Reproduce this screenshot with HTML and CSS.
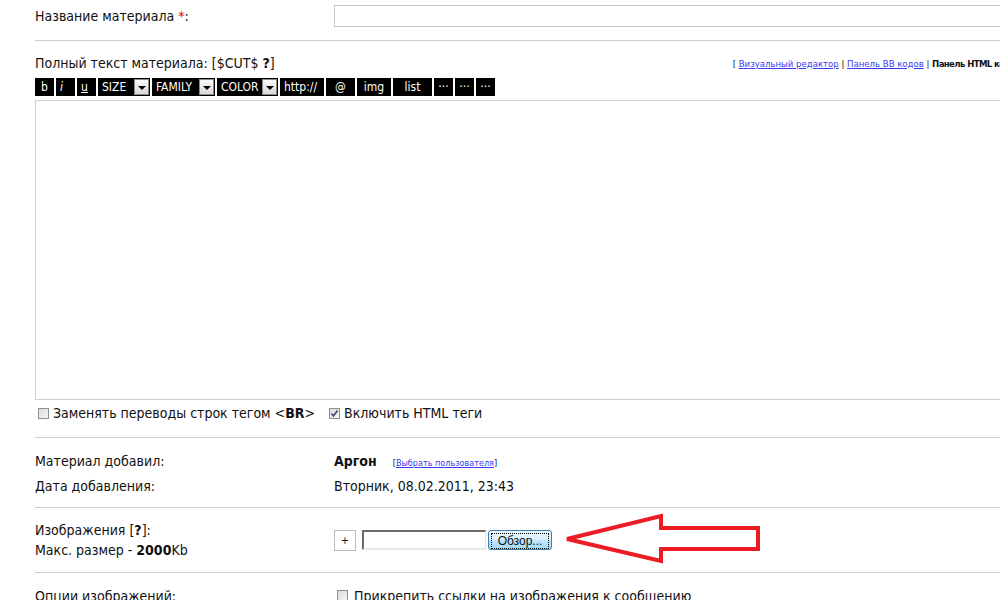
FILE: index.html
```html
<!DOCTYPE html>
<html lang="ru">
<head>
  <meta charset="UTF-8">
  <title>Добавление материала</title>
  <link rel="stylesheet" href="styles.css">
</head>
<body>
  <div class="page">
    <div class="row first">
      <div class="label">Название материала <span class="req">*</span>:</div>
      <div class="value"><input type="text" class="title-input"></div>
    </div>
    <div class="sep"></div>

    <div class="editor-head">
      <span class="label">Полный текст материала: [$CUT$ <b>?</b>]</span>
      <span class="modes">[ <a href="#">Визуальный редактор</a> | <a href="#">Панель BB кодов</a> | <b>Панель HTML кодов</b> ]</span>
    </div>
    <div class="toolbar">
      <span class="tb w19 bold">b</span>
      <span class="tb w19"><i>i</i></span>
      <span class="tb w19"><u>u</u></span>
      <span class="tb sel w52">SIZE<span class="arr"></span></span>
      <span class="tb sel w63">FAMILY<span class="arr"></span></span>
      <span class="tb sel w61">COLOR<span class="arr"></span></span>
      <span class="tb w44">http://</span>
      <span class="tb w29 c">@</span>
      <span class="tb w34 c">img</span>
      <span class="tb w39 c">list</span>
      <span class="tb w19 c">···</span>
      <span class="tb w19 c">···</span>
      <span class="tb w19 c">···</span>
    </div>
    <textarea class="message"></textarea>
    <div class="checks">
      <span class="chk"><span class="box"></span><span>Заменять переводы строк тегом &lt;<b>BR</b>&gt;</span></span>
      <span class="chk"><span class="box"><svg width="9" height="9" viewBox="0 0 9 9"><path d="M1.5 4.5 L3.5 7 L7.5 1.5" fill="none" stroke="#3d4a6b" stroke-width="1.6"/></svg></span><span>Включить HTML теги</span></span>
    </div>
    <div class="sep after-checks"></div>

    <div class="row info top">
      <div class="label">Материал добавил:</div>
      <div class="value"><b class="author">Аргон</b> <span class="small">[<a href="#">Выбрать пользователя</a>]</span></div>
    </div>
    <div class="row info">
      <div class="label">Дата добавления:</div>
      <div class="value">Вторник, 08.02.2011, 23:43</div>
    </div>
    <div class="sep after-info"></div>

    <div class="row images">
      <div class="label">Изображения [<b>?</b>]:<br>Макс. размер - <b>2000</b>Kb</div>
      <div class="value upload">
        <span class="plus">+</span>
        <span class="file-field"></span>
        <span class="browse"><span class="focus">Обзор...</span></span>
        <svg class="arrow" width="200" height="54" viewBox="0 0 200 54">
          <polygon points="4,26 98,3 98,15 195,15 195,36 98,36 98,48" fill="none" stroke="#ed1c24" stroke-width="4" stroke-linejoin="miter"/>
        </svg>
      </div>
    </div>
    <div class="sep"></div>

    <div class="row opts">
      <div class="label">Опции изображений:</div>
      <div class="value"><span class="chk"><span class="box"></span><span>Прикрепить ссылки на изображения к сообщению</span></span></div>
    </div>
  </div>
</body>
</html>
```

FILE: styles.css
```css
html, body {
  margin: 0;
  padding: 0;
  overflow: hidden;
  background: #fff;
}
body {
  font-family: "DejaVu Sans Condensed", "DejaVu Sans", sans-serif;
  font-size: 14px;
  color: #111;
}
.page {
  width: 1000px;
  padding-left: 35px;
}
.row {
  display: grid;
  grid-template-columns: 299px 1fr;
  align-items: center;
}
.row.first {
  height: 32px;
}
.req {
  color: #e00;
}
.title-input {
  width: 100%;
  height: 22px;
  box-sizing: border-box;
  border: 1px solid #c8c8c8;
  margin: 0;
}
.sep {
  height: 1px;
  background: #cdcdcd;
  margin: 8px 0;
}
.sep.after-checks {
  margin-top: 11px;
}
.sep.after-info {
  margin-top: 9px;
}
.editor-head {
  display: flex;
  justify-content: space-between;
  align-items: center;
  margin-top: 13px;
  height: 18px;
}
.modes {
  font-size: 9.5px;
  margin-right: 8px;
  white-space: nowrap;
}
.modes b {
  letter-spacing: -0.6px;
}
.modes a, .small a {
  color: #3a3af0;
}
.toolbar {
  display: flex;
  gap: 2px;
  margin-top: 6px;
  height: 18px;
}
.tb {
  background: #000;
  color: #fff;
  font-size: 12px;
  line-height: 18px;
  box-sizing: border-box;
  padding-left: 4px;
}
.tb.c {
  text-align: center;
  padding-left: 0;
}
.tb.bold {
  padding-left: 6px;
}
.sel {
  display: flex;
  justify-content: space-between;
  padding-right: 1px;
}
.arr {
  width: 15px;
  height: 16px;
  margin-top: 1px;
  box-sizing: border-box;
  border: 1px solid #8a8a8a;
  background: linear-gradient(#fafafa, #d8d8d8);
  position: relative;
}
.arr::after {
  content: "";
  position: absolute;
  left: 3px;
  top: 6px;
  border-left: 4px solid transparent;
  border-right: 4px solid transparent;
  border-top: 4px solid #000;
}
.w19 { width: 19px; }
.w29 { width: 29px; }
.w34 { width: 34px; }
.w39 { width: 39px; }
.w44 { width: 44px; }
.w52 { width: 52px; }
.w61 { width: 61px; }
.w63 { width: 63px; }
.message {
  display: block;
  width: 100%;
  height: 300px;
  box-sizing: border-box;
  margin: 4px 0 0;
  border: 1px solid #cfcfcf;
  resize: none;
}
.checks {
  display: flex;
  gap: 14px;
  height: 26px;
  align-items: center;
  padding-left: 3px;
}
.chk {
  display: inline-flex;
  align-items: center;
  gap: 4px;
}
.box {
  width: 11px;
  height: 11px;
  box-sizing: border-box;
  border: 1px solid #8e8f8f;
  background: linear-gradient(135deg, #dcdcdc, #f6f6f6);
  display: inline-flex;
  align-items: center;
  justify-content: center;
}
.row.info {
  height: 25px;
}
.row.info.top {
  margin-top: 10px;
}
.author {
  margin-right: 12px;
}
.small {
  font-size: 9px;
}
.row.images {
  height: 48px;
  line-height: 20px;
}
.upload {
  display: flex;
  align-items: center;
  gap: 6px;
  position: relative;
}
.plus {
  width: 22px;
  height: 21px;
  box-sizing: border-box;
  border: 1px solid #bbb;
  font-size: 11px;
  text-align: center;
  line-height: 19px;
}
.file-field {
  width: 124px;
  height: 20px;
  box-sizing: border-box;
  border: 2px solid #6a6a6a;
  border-right-color: #e4e4e4;
  border-bottom-color: #e8e8e8;
  border-width: 2px 1px 2px 2px;
  margin-right: -4px;
}
.browse {
  width: 64px;
  height: 20px;
  box-sizing: border-box;
  border: 1px solid #3c7fb1;
  border-radius: 3px;
  background: linear-gradient(#eaf6fd 0%, #d9f0fc 50%, #bee6fd 51%, #a7d9f5 100%);
  padding: 2px;
  font-family: "Liberation Sans", sans-serif;
  font-size: 12px;
  line-height: 14px;
}
.focus {
  display: block;
  height: 14px;
  line-height: 14px;
  border: 1px dotted #000;
  text-align: center;
}
.arrow {
  position: absolute;
  left: 229px;
  top: -17px;
}
.row.opts {
  height: 30px;
}
.opts .box {
  margin-right: 2px;
  margin-left: 3px;
}
```
